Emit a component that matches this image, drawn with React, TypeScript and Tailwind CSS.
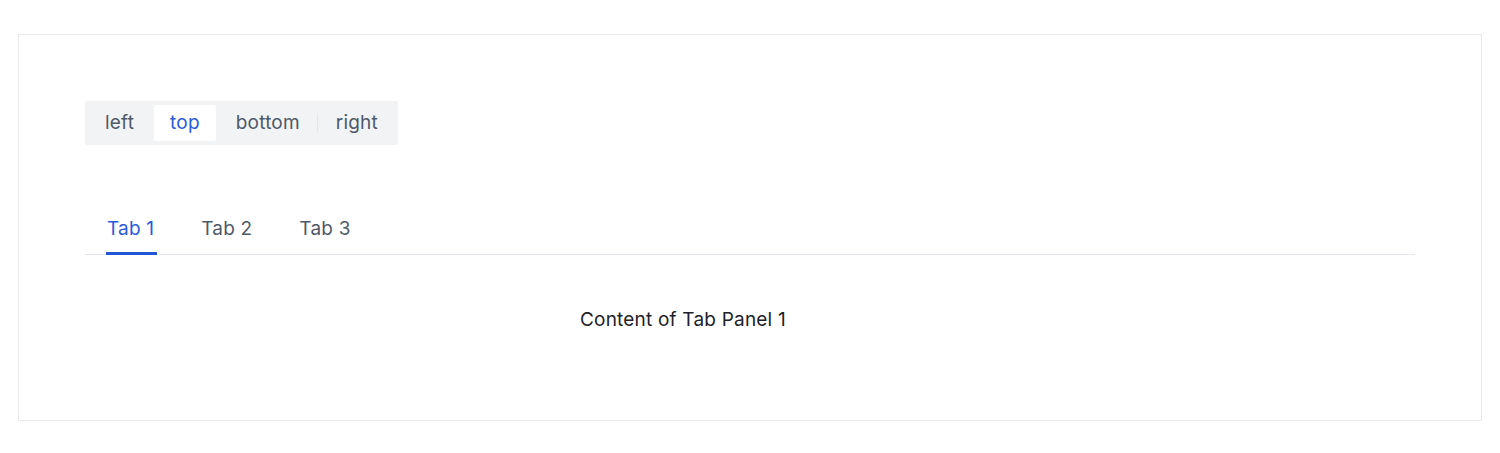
import React, { useState } from "react";

const positions = ["left", "top", "bottom", "right"];
const tabs = ["Tab 1", "Tab 2", "Tab 3"];

const App: React.FC = () => {
  const [position, setPosition] = useState("top");
  const [activeTab, setActiveTab] = useState(0);

  return (
    <div
      className="bg-white px-[18px] pt-[34px] pb-[32px] tracking-[0.2px]"
      style={{ fontFamily: "Inter, 'Noto Sans', sans-serif" }}
    >
      <div className="h-[387px] border border-[#e8e9ec] bg-white pl-[66px] pr-[66px] pt-[66px]">
        {/* Position switcher */}
        <div className="flex h-[44px] w-fit items-center rounded-[2px] bg-[#f2f3f5] p-[4px]">
          {positions.map((p, i) => {
            const checked = p === position;
            const prevChecked = i > 0 && positions[i - 1] === position;
            return (
              <React.Fragment key={p}>
                {i > 0 && (
                  <div className="flex h-[36px] w-[4px] items-center justify-center">
                    {!checked && !prevChecked && (
                      <div className="h-[18px] w-px bg-[#e5e6eb]" />
                    )}
                  </div>
                )}
                <div
                  onClick={() => setPosition(p)}
                  className={
                    "h-[36px] cursor-pointer rounded-[2px] px-[16px] text-[19px] leading-[36px] " +
                    (checked ? "bg-white text-[#2a5bd7]" : "text-[#4e5969]")
                  }
                >
                  {p}
                </div>
              </React.Fragment>
            );
          })}
        </div>

        {/* Tabs */}
        <div className="mt-[63px] flex h-[47px] items-start border-b border-[#e5e6eb] pl-[22px]">
          {tabs.map((t, i) => (
            <div
              key={t}
              onClick={() => setActiveTab(i)}
              className={
                "relative mr-[47px] h-[46px] cursor-pointer pt-[9px] text-[19px] leading-[24px] " +
                (i === activeTab ? "text-[#2a5bd7]" : "text-[#4e5969]")
              }
            >
              {t}
              {i === activeTab && (
                <span className="absolute bottom-[-1px] left-[-1px] right-[-3px] h-[3px] bg-[#2356d4]" />
              )}
            </div>
          ))}
        </div>

        <div className="pl-[495px] pt-[53px] text-[19px] leading-[24px] text-[#1d2129]">
          Content of Tab Panel {activeTab + 1}
        </div>
      </div>
    </div>
  );
};

export default App;
